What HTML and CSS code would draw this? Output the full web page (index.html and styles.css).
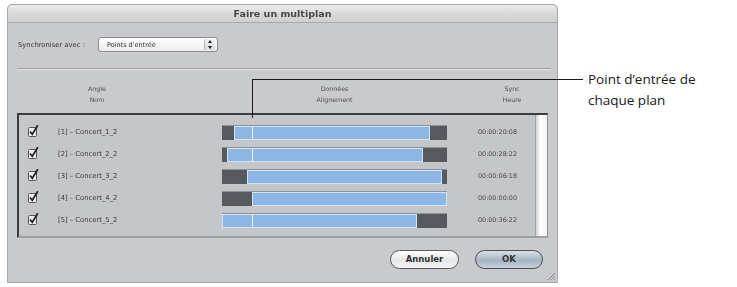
FILE: index.html
```html
<!DOCTYPE html>
<html>
<head>
<meta charset="utf-8">
<title>Faire un multiplan</title>
<link rel="stylesheet" href="styles.css">
</head>
<body>
<div class="page">
	<div class="dialog">
		<div class="titlebar">Faire un multiplan</div>
		<div class="content">
			<div class="sync">
				<span class="label">Synchroniser avec :</span>
				<div class="popup">
					<span class="txt">Points d'entrée</span>
					<span class="stepper"><i class="up"></i><i class="down"></i></span>
				</div>
			</div>
			<div class="sep"></div>

			<div class="head">
				<div class="h-angle">Angle<br>Nom</div>
				<div class="h-data">Données<br>Alignement</div>
				<div class="h-sync">Sync<br>Heure</div>
			</div>

			<div class="table">
				<div class="rows">
					<div class="row">
						<svg class="check" width="11" height="13" viewBox="0 0 11 13"><rect x="0.5" y="3.5" width="8" height="9" rx="1" fill="#eeeeee" stroke="#555"/><path d="M2 7.5 L4.3 10.2 L9.8 1.2" stroke="#1e1e1e" stroke-width="1.7" fill="none"/></svg>
						<span class="name">[1] – Concert_1_2</span>
						<div class="bar"><i class="dark" style="width:12px"></i><i class="blue" style="width:196px"></i><i class="dark" style="width:17px"></i><b class="mark"></b></div>
						<span class="time">00:00:20:08</span>
					</div>
					<div class="row">
						<svg class="check" width="11" height="13" viewBox="0 0 11 13"><rect x="0.5" y="3.5" width="8" height="9" rx="1" fill="#eeeeee" stroke="#555"/><path d="M2 7.5 L4.3 10.2 L9.8 1.2" stroke="#1e1e1e" stroke-width="1.7" fill="none"/></svg>
						<span class="name">[2] – Concert_2_2</span>
						<div class="bar"><i class="dark" style="width:5px"></i><i class="blue" style="width:196px"></i><i class="dark" style="width:24px"></i><b class="mark"></b></div>
						<span class="time">00:00:28:22</span>
					</div>
					<div class="row">
						<svg class="check" width="11" height="13" viewBox="0 0 11 13"><rect x="0.5" y="3.5" width="8" height="9" rx="1" fill="#eeeeee" stroke="#555"/><path d="M2 7.5 L4.3 10.2 L9.8 1.2" stroke="#1e1e1e" stroke-width="1.7" fill="none"/></svg>
						<span class="name">[3] – Concert_3_2</span>
						<div class="bar"><i class="dark" style="width:25px"></i><i class="blue" style="width:195px"></i><i class="dark" style="width:5px"></i></div>
						<span class="time">00:00:06:18</span>
					</div>
					<div class="row">
						<svg class="check" width="11" height="13" viewBox="0 0 11 13"><rect x="0.5" y="3.5" width="8" height="9" rx="1" fill="#eeeeee" stroke="#555"/><path d="M2 7.5 L4.3 10.2 L9.8 1.2" stroke="#1e1e1e" stroke-width="1.7" fill="none"/></svg>
						<span class="name">[4] – Concert_4_2</span>
						<div class="bar"><i class="dark" style="width:30px"></i><i class="blue" style="width:195px"></i></div>
						<span class="time">00:00:00:00</span>
					</div>
					<div class="row">
						<svg class="check" width="11" height="13" viewBox="0 0 11 13"><rect x="0.5" y="3.5" width="8" height="9" rx="1" fill="#eeeeee" stroke="#555"/><path d="M2 7.5 L4.3 10.2 L9.8 1.2" stroke="#1e1e1e" stroke-width="1.7" fill="none"/></svg>
						<span class="name">[5] – Concert_5_2</span>
						<div class="bar"><i class="blue" style="width:195px"></i><i class="dark" style="width:30px"></i><b class="mark"></b></div>
						<span class="time">00:00:36:22</span>
					</div>
				</div>
				<div class="scroll"></div>
			</div>

			<div class="buttons">
				<div class="btn">Annuler</div>
				<div class="btn btn-ok">OK</div>
			</div>
		</div>
		<svg class="grip" width="9" height="9" viewBox="0 0 9 9"><path d="M8 1 L1 8 M8 4 L4 8 M8 7 L7 8" stroke="#888" stroke-width="1"/></svg>
	</div>

	<div class="callout">Point d’entrée de<br>chaque plan</div>
	<div class="line-h"></div>
	<div class="line-v"></div>
</div>
</body>
</html>
```

FILE: styles.css
```css
* {
	box-sizing: border-box;
}

body {
	margin: 0;
	background: #fff;
	font-family: "DejaVu Sans", sans-serif;
	color: #3a3a3a;
}

.page {
	position: relative;
	display: flex;
	align-items: flex-start;
	padding: 4px 0 0 7px;
	height: 287px;
}

/* dialog */
.dialog {
	position: relative;
	width: 551px;
	height: 279px;
	background: #c9cacd;
	border: 1px solid #a6a7aa;
	border-radius: 5px 5px 0 0;
	display: flex;
	flex-direction: column;
}

.titlebar {
	height: 18px;
	line-height: 17px;
	text-align: center;
	font-size: 9.5px;
	font-weight: bold;
	color: #474747;
	background: linear-gradient(#ececec, #d6d6d8 60%, #cfd0d2);
	border-bottom: 1px solid #a9aaad;
	border-radius: 5px 5px 0 0;
	filter: grayscale(1);
}

.content {
	flex: 1;
	display: flex;
	flex-direction: column;
	padding: 0 9px 0 9px;
}

.sync {
	display: flex;
	align-items: center;
	margin-top: 14px;
	height: 15px;
	padding-left: 1px;
}
.label {
	font-size: 6.8px;
	color: #333;
	width: 80px;
	filter: grayscale(1);
}
.popup {
	display: flex;
	align-items: center;
	justify-content: space-between;
	width: 120px;
	height: 15px;
	padding-left: 8px;
	background: linear-gradient(#ffffff, #ececec);
	border: 1px solid #8d8e91;
	border-radius: 3px;
	font-size: 6.5px;
	color: #2a2a2a;
}
.popup .txt {
	filter: grayscale(1);
}
.stepper {
	position: relative;
	width: 11px;
	height: 11px;
	margin-right: 2px;
	border-radius: 2px;
	background: linear-gradient(#f4f4f4, #d9d9d9);
	border-left: 1px solid #b3b3b3;
}
.stepper i {
	position: absolute;
	left: 3px;
	width: 0;
	height: 0;
	border-left: 2.5px solid transparent;
	border-right: 2.5px solid transparent;
}
.stepper .up {
	top: 1px;
	border-bottom: 3px solid #222;
}
.stepper .down {
	bottom: 1px;
	border-top: 3px solid #222;
}

.sep {
	margin: 16px -3px 0 1px;
	height: 2px;
	border-top: 1px solid #9c9da0;
	border-bottom: 1px solid #e4e4e6;
}

/* column heads */
.head {
	display: flex;
	margin-top: 13px;
	font-size: 6.3px;
	line-height: 11px;
	color: #505050;
	text-align: center;
	filter: grayscale(1);
}
.h-angle {
	width: 160px;
}
.h-data {
	width: 225px;
	margin-left: 45px;
}
.h-sync {
	width: 68px;
	margin-left: 31px;
}

/* table */
.table {
	display: flex;
	margin-top: 8px;
	width: 531px;
	height: 125px;
	background: #c5c6c9;
	border-top: 2px solid #3b3c3e;
	border-left: 2px solid #3b3c3e;
	border-right: 1px solid #8e8f92;
	border-bottom: 2px solid #9d9ea1;
}
.rows {
	flex: 1;
	display: flex;
	flex-direction: column;
	padding: 6px 0 0 9px;
}
.row {
	display: flex;
	align-items: center;
	height: 22px;
}
.check {
	flex: none;
	margin-top: -3px;
}
.name {
	width: 164px;
	margin-left: 19px;
	font-size: 6.8px;
	color: #3a3a3a;
	filter: grayscale(1);
}
.bar {
	position: relative;
	display: flex;
	width: 225px;
	height: 15px;
	background: #a8aaae;
	border-top: 1px solid #8f9195;
}
.bar i {
	display: block;
	height: 100%;
}
.bar .dark {
	background: #56595e;
}
.bar .blue {
	background: #8cb6e4;
	border: 1px solid #d3e3f3;
}
.bar .mark {
	position: absolute;
	left: 30px;
	top: 0;
	width: 1px;
	height: 100%;
	background: #eef4fb;
}
.time {
	margin-left: 31px;
	font-size: 6.4px;
	color: #444;
	filter: grayscale(1);
}
.scroll {
	width: 12px;
	background: linear-gradient(90deg, #d4d4d6, #ffffff 40%, #f4f4f4);
	border-left: 1px solid #a0a1a4;
}

/* buttons */
.buttons {
	display: flex;
	justify-content: flex-end;
	gap: 16px;
	margin-top: 12px;
	padding-right: 5px;
}
.btn {
	width: 69px;
	height: 19px;
	line-height: 17px;
	text-align: center;
	font-size: 8.5px;
	font-weight: bold;
	color: #333;
	background: linear-gradient(#ffffff, #e6e6e6 55%, #f4f4f4);
	border: 1px solid #5a5b5e;
	border-radius: 10px;
}
.btn-ok {
	width: 68px;
	background: linear-gradient(#d9e0e8, #a8b4c2 55%, #c7d0da);
	border-color: #4a4d52;
}

.grip {
	position: absolute;
	right: 1px;
	bottom: 1px;
}

/* callout */
.callout {
	margin: 65px 0 0 30px;
	font-family: "Open Sans", sans-serif;
	font-size: 13.5px;
	line-height: 21px;
	color: #1a1a1a;
}
.line-h {
	position: absolute;
	left: 252px;
	top: 79px;
	width: 331px;
	height: 1px;
	background: #1a1a1a;
}
.line-v {
	position: absolute;
	left: 252px;
	top: 79px;
	width: 1px;
	height: 39px;
	background: #1a1a1a;
}
```
